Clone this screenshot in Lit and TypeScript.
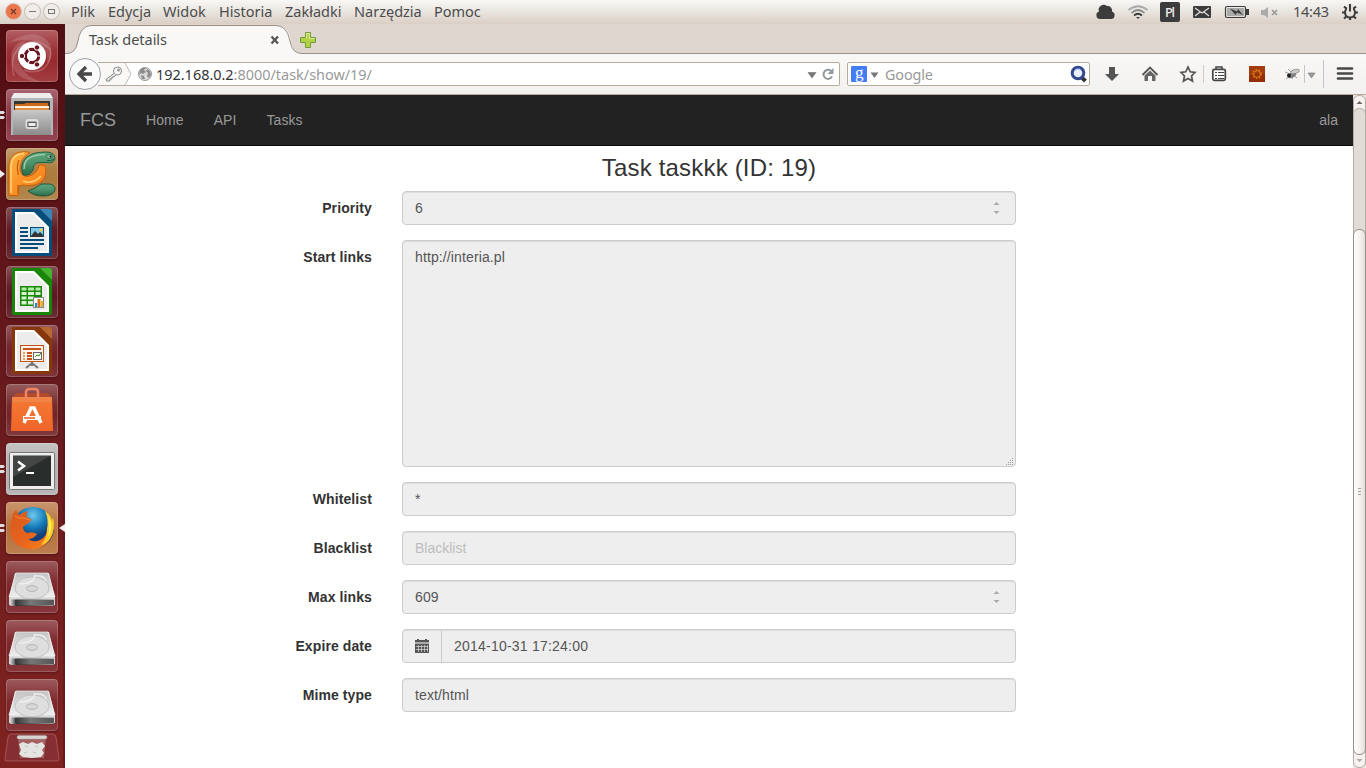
import { LitElement, html, css, svg, nothing } from "lit";
import { customElement, property } from "lit/decorators.js";

const page = (edge: string, body: string, inner: unknown) => svg`
  <path d="M6 2H34L46 14V47q0 2-2 2H8q-2 0-2-2z" fill="${edge}"/>
  <path d="M34 2H43q3 0 3 3V14z" fill="${body}"/>
  <path d="M9 5H28L43 20V46H9z" fill="#fff"/>
  <path d="M11 7H27L41 21V44H11z" fill="#ececec"/>
  ${inner}`;

const disk = svg`
  <path d="M9 12H43L49 37V44H3V37z" fill="#d5d5d5"/>
  <path d="M10 12H42L49 36H3z" fill="url(#metal)" stroke="#f2f2f2" stroke-width=".7"/>
  <ellipse cx="26" cy="27" rx="17" ry="11" fill="#dedede" stroke="#c2c2c2"/>
  <path d="M13 23q15 0 16-9M40 20q-1-6-12-5" fill="none" stroke="#f3f3f3" stroke-width="1.2"/>
  <ellipse cx="26" cy="27.500" rx="5.500" ry="2.800" fill="#d8d8d8" stroke="#b2b2b2"/>
  <path d="M4 38.500H48V44q0 1-1 1H5q-1 0-1-1z" fill="url(#dark)"/>
  <path d="M9 39H48V44H9z" fill="url(#slot)"/>`;

const icons: Record<string, unknown> = {
  ubuntu: svg`
    <path d="M8 46Q2 24 18 14Q31 7 44 19Q47 31 37 39Q28 44 18 40" fill="none" stroke="#fff" stroke-width="1.500" opacity=".2"/>
    <path d="M2 13Q30-5 44 14Q48 27 41 34Q43 17 28 11Q17 8 2 13M5 27Q5 51 36 52Q18 47 13 32Q10 18 21 10Q6 13 5 27" fill="#fff" opacity=".15"/>
    <circle cx="26" cy="26" r="14" fill="#fff"/>
    <circle cx="26" cy="26" r="6.700" fill="none" stroke="#68151d" stroke-width="3.200"/>
    <path d="M26 26H36M26 26L21 17M26 26L21 35" stroke="#fff" stroke-width="1.200"/>
    <circle cx="26" cy="26" r="5" fill="#fff"/>
    <g fill="#68151d" stroke="#fff" stroke-width="1"><circle cx="16" cy="26" r="2.700"/><circle cx="31" cy="17.500" r="2.700"/><circle cx="31" cy="34.500" r="2.700"/></g>`,
  files: svg`
    <path d="M8 4H44L47 10V46H5V10z" fill="#b5b5b5"/><path d="M8 4H44L47 9H5z" fill="#ededed"/>
    <path d="M8 12H44V22H8z" fill="#383632"/><path d="M9 15H18L20 14H42V20H9z" fill="#cc691d"/>
    <path d="M9 17H43V22H9z" fill="#fff2dc"/><path d="M9 19H43V23H9z" fill="#df9244"/>
    <path d="M7 21H45V46H7z" fill="url(#metal2)"/><rect x="20.500" y="31" width="11" height="8" rx="2" fill="#aaa" stroke="#ddd" stroke-width="2"/>
    <rect x="22" y="33.500" width="8" height="4" fill="#eee" stroke="#555"/>`,
  charm: svg`
    <path d="M3 47.500V17Q4 4 18 3.500L24 4.500Q13 11 14 22Q16 30 23 28Q31 26 33 17H39Q42 28 35 34Q28 39 17 37L12.500 38V47.500z" fill="url(#orange)" stroke="#c65a0c" stroke-width=".9"/>
    <path d="M5 45V18Q6 6 18 5.500M17 33Q27 37 35 28" fill="none" stroke="#ffd27a" stroke-width="1.500"/>
    <path d="M12 37V46M13 12Q10 18 12.500 27" fill="none" stroke="#c65a0c" stroke-width="1.200"/>
    <path d="M17 27Q12 12 26 6Q30 4 40 4Q49 4 49 11Q47 16 41 14.500H33Q27 15 27 22Q24 28 17 27z" fill="url(#green)" stroke="#1b5a40" stroke-width=".9"/>
    <path d="M18 21Q18 10 28 8Q33 6 39 6.500" fill="none" stroke="#9bcaa5" stroke-width="1.500"/>
    <path d="M22 43Q29 41 35 36H43Q49 36 49 42Q47 48 37 48Q28 48 22 43z" fill="url(#green)" stroke="#174e38" stroke-width=".9"/>
    <ellipse cx="43.500" cy="8.500" rx="3" ry="1.800" fill="#9dc4a4" stroke="#1b5a40" stroke-width=".7"/><circle cx="44.500" cy="8.500" r="1.100" fill="#142f25"/><path d="M41 12.500Q45 13.500 48 11" fill="none" stroke="#1b5a40"/>`,
  writer: page("#064d7c", "#3887b7", svg`<path d="M14 21H22M14 25H22M14 29H22M14 33H38M14 37H38M14 41H32" stroke="#064d7c" stroke-width="2"/><rect x="24.500" y="20.500" width="13" height="9" fill="#83c7e9" stroke="#064d7c"/><path d="M25 29L29 24L32 27L34 25L37 28V30H25z" fill="#343434"/><circle cx="35" cy="23" r="1.500" fill="#fbce2a"/>`),
  calc: page("#188707", "#43b52e", svg`<rect x="14" y="20" width="22" height="20" fill="#188707"/><g fill="#b3edaa"><path d="M15.500 21.500h5v3h-5zM22 21.500h6v3h-6zM29.500 21.500h5v3h-5z"/></g><g fill="#d7f3d2"><path d="M15.500 26h5v3h-5zM22 26h6v3h-6zM29.500 26h5v3h-5zM15.500 30.500h5v3h-5zM22 30.500h6v3h-6zM15.500 35h5v3.500h-5zM22 35h6v3.500h-6z"/></g><rect x="27.500" y="31.500" width="10" height="10" fill="#fff" stroke="#888"/><path d="M29 37h2v4h-2z" fill="#118be0"/><path d="M31.500 33h3v8h-3z" fill="#dc6c12"/><path d="M35 35h2v6h-2z" fill="#e6b619"/>`),
  impress: page("#86370b", "#b7682f", svg`<path d="M26 38L20 43M26 38L32 43M26 36V41" stroke="#777" stroke-width="2"/><rect x="14.500" y="20.500" width="23" height="16" fill="#fff6ee" stroke="#c75417"/><path d="M17 24H35M21 28H26M21 31H26M21 34H26" stroke="#cb5216" stroke-width="2"/><path d="M17 28h2m-2 3h2m-2 3h2" stroke="#e99a65" stroke-width="2"/><rect x="27.500" y="27.500" width="8" height="7" fill="#fff" stroke="#666"/><path d="M29 32L31 30L33 31L35 28" stroke="#2a9519" fill="none"/>`),
  software: svg`
    <path d="M6 14L10 9H42L46 14z" fill="#b34a2b"/>
    <path d="M6 13H46L47 47H5z" fill="url(#bag)"/><path d="M6 13H46L45 18H7z" fill="#ef8d55" opacity=".6"/>
    <path d="M20 15V8Q20 5 24 5H29Q32 5 32 8V15" fill="none" stroke="#ed8362" stroke-width="2.500"/>
    <path d="M18 39L25 24H28L35 39" fill="none" stroke="#fff" stroke-width="3.500"/>
    <path d="M17 34H35" stroke="#fff" stroke-width="4"/><path d="M18 34H29" stroke="#eb5b20" stroke-width="1.500"/>`,
  terminal: svg`
    <rect x="3.500" y="9.500" width="45" height="37" rx="1" fill="#eee" stroke="#777"/>
    <rect x="7" y="12.500" width="38" height="30.500" fill="#292d2c"/><path d="M7 12.500H45L7 34z" fill="#fff" opacity=".12"/>
    <path d="M12 18.500L18 23L12 27.500" fill="none" stroke="#fff" stroke-width="2.500"/><path d="M20 30H28" stroke="#fff" stroke-width="2"/>`,
  firefox: svg`
    <circle cx="27" cy="26" r="21" fill="url(#globe)"/>
    <path d="M7 12L10 8L13 13Q17 10 22 9Q20 13 21 15L25 17Q25 20 21 22L17 25Q17 30 22 31Q26 29 31 32Q28 37 22 37Q28 41 34 38Q42 34 42 24L47 20Q49 31 42 40Q34 49 22 47Q9 45 5 34Q3 22 7 12z" fill="url(#fox)"/>
    <path d="M39 9Q46 14 46 19L47 15Q50 27 44 37Q40 42 35 43Q41 36 41 27Q43 18 39 9" fill="#ffc928"/>
    <path d="M42 14Q46 20 45 28Q44 33 42 35Q44 27 42 14" fill="#fff061"/>
    <path d="M9 14Q13 17 18 16L24 18" fill="none" stroke="#fb9837" stroke-width=".8"/>`,
  disk,
};

const launcher = [
  ["ubuntu", "#982a2f", ""], ["files", "#893443", "two"], ["charm", "#ac7b3c", "one"],
  ["writer", "#5b1921", ""], ["calc", "#5b1921", ""], ["impress", "#702127", ""],
  ["software", "#722528", ""], ["terminal", "#b3afb0", "two"], ["firefox", "#b7723e", "two active"],
  ["disk", "#7b2428", ""], ["disk", "#7b2428", ""], ["disk", "#7b2428", ""],
];

const tileIcon = (name: string) => html`<svg width="52" height="52" viewBox="0 0 52 52"><defs>
  <linearGradient id="metal" x2="0" y2="1"><stop stop-color="#c4c4c4"/><stop offset="1" stop-color="#eee"/></linearGradient>
  <linearGradient id="metal2" x2="0" y2="1"><stop stop-color="#c8c8c8"/><stop offset="1" stop-color="#8c8c8c"/></linearGradient>
  <linearGradient id="dark"><stop stop-color="#ddd"/><stop offset=".15" stop-color="#333"/><stop offset="1" stop-color="#999"/></linearGradient>
  <linearGradient id="slot"><stop stop-color="#333"/><stop offset=".4" stop-color="#777"/><stop offset="1" stop-color="#555"/></linearGradient>
  <linearGradient id="orange" x2="1" y2="1"><stop stop-color="#ffb545"/><stop offset=".5" stop-color="#fb9226"/><stop offset="1" stop-color="#f07c16"/></linearGradient>
  <linearGradient id="green" x2="0" y2="1"><stop stop-color="#5fa67c"/><stop offset=".5" stop-color="#4c926b"/><stop offset="1" stop-color="#2b6b49"/></linearGradient>
  <linearGradient id="bag" x2="0" y2="1"><stop stop-color="#f47934"/><stop offset="1" stop-color="#ef6529"/></linearGradient>
  <radialGradient id="globe" cy=".2"><stop stop-color="#6cc9ef"/><stop offset=".6" stop-color="#1479b7"/><stop offset="1" stop-color="#133e79"/></radialGradient>
  <linearGradient id="fox" y2="1"><stop stop-color="#d9591d"/><stop offset=".55" stop-color="#e8641d"/><stop offset="1" stop-color="#f98b1c"/></linearGradient>
</defs>${icons[name]}</svg>`;

@customElement("app-launcher")
class AppLauncher extends LitElement {
  static styles = css`
    :host { display: block; width: 65px; height: 744px; overflow: hidden; background: linear-gradient(#520e13, #681a1d 50%, #802320); box-shadow: inset -2px 0 1px #49151980; box-sizing: border-box; padding-top: 6px; }
    .items { display: flex; flex-direction: column; gap: 7px; }
    .row { height: 52px; display: grid; grid-template-columns: 6px 52px 7px; align-items: center; }
    .tile { width: 52px; height: 52px; border-radius: 4px; box-shadow: inset 0 0 0 1px #ffffff30, 0 1px 2px #24050766; background-image: linear-gradient(#ffffff40, #ffffff08 40%, #fff0 60%, #ffffff18); }
    svg { display: block; }
    .trash { margin: 2px 0 0 3px; }
  `;
  render() {
    return html`
      <div class="items">${launcher.map(([name, color, state]) => html`<div class="row">
        <svg width="6" height="16" viewBox="0 0 6 16">${state.includes("two") ? svg`<path d="M0 4H3.500L5 5.500L3.500 7H0zM0 9H3.500L5 10.500L3.500 12H0z" fill="#ddd"/>` : state === "one" ? svg`<path d="M0 4L5 8L0 12z" fill="#eee"/>` : nothing}</svg>
        <div class="tile" style="background-color:${color}">${tileIcon(name)}</div>
        <svg width="7" height="14" viewBox="0 0 7 14">${state.includes("active") ? svg`<path d="M7 3L1 7L7 11z" fill="#eee"/>` : nothing}</svg>
      </div>`)}</div>
      <svg class="trash" width="58" height="31" viewBox="0 0 58 31">
        <path d="M8 1H50Q52 1 53 4L56 26Q56 28 54 28H4Q1 28 2 26L5 4Q6 1 8 1z" fill="#842f31" stroke="#b26566" stroke-width=".7"/>
        <path d="M15 4H43L41 25H17z" fill="#b98384" opacity=".6"/>
        <path d="M16 11L20 9L25 11L29 9L34 11L39 9L42 13L39 17L41 20L38 24L29 25L20 24L16 21L18 17z" fill="#e4e4e1"/>
        <path d="M22 13L25 14M32 13L35 14M30 19L33 20M21 20L24 19" fill="none" stroke="#c3c3c0"/>
        <rect x="14" y="2.500" width="30" height="3.500" rx="1.700" fill="#d8d4d3" stroke="#a8a1a0" stroke-width=".5"/>
      </svg>`;
  }
}

@customElement("system-bar")
class SystemBar extends LitElement {
  static styles = css`
    :host { display: flex; height: 24px; box-sizing: border-box; background: linear-gradient(#f9f7f5, #eae6e1 45%, #dacfc5); font: 14.500px/23px "Noto Sans", "Open Sans", sans-serif; color: #4c4c4c; }
    .controls { width: 71px; height: 24px; flex: none; }
    .menu { display: flex; flex: 1; }
    .menu span { white-space: nowrap; flex: none; }
    .tray { width: 274px; height: 24px; flex: none; }
  `;
  render() {
    const menus: [string, number][] = [["Plik", 37], ["Edycja", 55], ["Widok", 56], ["Historia", 66], ["Zakładki", 69], ["Narzędzia", 80], ["Pomoc", 60]];
    return html`<svg class="controls" viewBox="0 0 71 24">
      <circle cx="13.500" cy="11.500" r="8" fill="#ed764d" stroke="#d3cac2"/><path d="M11 9L16 14M16 9L11 14" stroke="#713d2e" stroke-width="1.300"/>
      <circle cx="32.500" cy="11.500" r="8" fill="#f0ece7" stroke="#c4bcb3"/><path d="M29 11.500H36" stroke="#777"/>
      <circle cx="51.500" cy="11.500" r="8" fill="#f0ece7" stroke="#c4bcb3"/><rect x="48.500" y="9.500" width="6" height="4" fill="none" stroke="#777"/></svg>
      <div class="menu">${menus.map(([m, w]) => html`<span style="width:${w}px">${m}</span>`)}</div>
      <svg class="tray" viewBox="1092 0 274 24" fill="#3c3c3c">
        <path d="M1100 19a3.800 3.800 0 0 1-1-7.400a5 5 0 0 1 8-5.500a4.500 4.500 0 0 1 5 5.500a3.800 3.800 0 0 1-1 7.400z"/>
        <g fill="none" stroke-width="1.700"><path d="M1128.500 10Q1138 2.500 1147.500 10" stroke="#aaa"/><path d="M1131.500 13Q1138 7 1144.500 13" stroke="#888"/><path d="M1134 15.500Q1138 12 1142 15.500" stroke="#3c3c3c"/></g><path d="M1136 17H1140L1138 19z"/>
        <rect x="1160" y="2" width="20" height="20" rx="2"/><text x="1165" y="17" font-size="13" font-weight="500" fill="#eee" textLength="10">Pl</text>
        <rect x="1193" y="6" width="18" height="12" rx="1"/><path d="M1195 8L1202 13L1209 8M1195 16L1200 12M1209 16L1204 12" fill="none" stroke="#e5dfd9" stroke-width="1.200"/>
        <rect x="1225.500" y="6.500" width="20" height="11" rx="1.500" fill="none" stroke="#3c3c3c" stroke-width="1.200"/><rect x="1227" y="8" width="17" height="8" fill="#aaa"/><path d="M1246 9h3v6h-3"/><path d="M1230 8.500L1237 11.500L1238 9L1243 15L1237 12.500L1235.500 15z"/>
        <path d="M1261 10H1264L1268 7V18L1264 15H1261z" fill="#aaa"/><path d="M1272 10L1277 15M1277 10L1272 15" stroke="#999" stroke-width="1.700"/>
        <text x="1293" y="17" font-size="14.500" fill="#4c4c4c" textLength="36">14:43</text>
        <circle cx="1350" cy="12.500" r="5" fill="none" stroke="#3c3c3c" stroke-width="2"/><g stroke="#3c3c3c" stroke-width="2.200"><path d="M1350 17V20M1342 12.500H1345M1355 12.500H1358M1344 6.500L1347 9M1356 6.500L1353 9M1344 18.500L1347 16M1356 18.500L1353 16"/></g><path d="M1347 4H1353V11H1347z" fill="#e7e1dc"/><path d="M1349 4H1351V11.500H1349z"/>
      </svg>`;
  }
}

@customElement("browser-chrome")
class BrowserChrome extends LitElement {
  static styles = css`
    :host { display: block; height: 71px; font-family: "Noto Sans", "Open Sans", sans-serif; font-size: 14.400px; color: #3c3c3c; }
    .tabs { display: block; height: 30px; width: 1301px; background: #dfd6d0; }
    .bar { height: 41px; box-sizing: border-box; border-bottom: 1px solid #b6aa99; background: linear-gradient(#f9f8f6, #f3f1ef); display: flex; align-items: center; }
    .bar svg { display: block; flex: none; }
    .nav { width: 72px; height: 40px; }
    .address { flex: none; width: 703px; height: 24px; box-sizing: border-box; border: 1px solid #b7ab9c; border-left: 0; border-radius: 0 2px 2px 0; background: #fff; display: flex; align-items: center; justify-content: space-between; }
    .search { flex: none; width: 243px; height: 24px; margin-left: 7px; box-sizing: border-box; border: 1px solid #b7ab9c; border-radius: 2px; background: #fff; display: flex; align-items: center; color: #999; justify-content: space-between; }
    .search span { flex: 1; letter-spacing: -.15px; }
    .tools { width: 276px; height: 40px; }
  `;
  render() {
    return html`<svg class="tabs" viewBox="65 24 1301 30">
      <path d="M65 53.500Q75 54 77.500 45Q80 25.500 90 25.500H276Q289 25.500 291 42Q293 53.500 302 53.500V54H65z" fill="#f9f8f6"/>
      <path d="M65 53.500H67Q75 53.500 77.500 43Q80 25.500 91 25.500H276Q287 25.500 290 41Q292 53.500 302 53.500H1366" fill="none" stroke="#978f88"/>
      <text x="89" y="45" font-size="14.500" fill="#4b4b4b" textLength="78">Task details</text>
      <path d="M271.500 36.500L278 43.500M278 36.500L271.500 43.500" stroke="#555" stroke-width="2.300"/>
      <path d="M305.500 32.500H310.500V37.500H315.500V42.500H310.500V47.500H305.500V42.500H300.500V37.500H305.500z" fill="#b1d241" stroke="#78993b"/>
      <path d="M306.500 38.500V33.500H309.500V38.500H314.500" fill="none" stroke="#dbed9b"/>
    </svg>
    <div class="bar">
      <svg class="nav" viewBox="65 54 72 40"><path d="M98 62H137V86H98z" fill="#fff"/><path d="M98 63H125L131 74L125 85H98z" fill="#f9f8f6"/><path d="M98 62.500H137M98 85.500H137" stroke="#b7ab9c"/><path d="M125 63L131 74L125 85" fill="none" stroke="#bbb"/>
        <circle cx="85" cy="74" r="15.500" fill="#fafafa" stroke="#9ba0aa"/><path d="M92 74H81M86 67L79 74L86 81" fill="none" stroke="#484848" stroke-width="3.300"/>
        <circle cx="117.500" cy="71" r="4" fill="#f7f7f7" stroke="#888"/><circle cx="118.500" cy="70" r="1.500" fill="#999"/><path d="M114 73.500L106.500 79V81H110V79H112V77H114L116 75" fill="#e8e8e8" stroke="#888"/>
      </svg>
      <div class="address"><svg width="629" height="22" viewBox="137 63 629 22">
        <circle cx="145" cy="74" r="6.500" fill="#d9d9d9" stroke="#999"/><path d="M140 70Q142 67 146 68L144 70L146 72L143 74L141 73L139 75zM147 69L150 71L151 75L149 78L147 76L148 73L146 71zM141 75L144 76L145 79L142 79z" fill="#8c8c8c"/>
        <text x="156" y="80" fill="#999" font-size="14.500" textLength="216" lengthAdjust="spacingAndGlyphs"><tspan fill="#333">192.168.0.2</tspan>:8000/task/show/19/</text></svg><svg width="34" height="22" viewBox="806 63 34 22"><path d="M809 72.500H817L813 78z" fill="#777" stroke="#666" stroke-width=".5"/><path d="M832.500 71.500A4.500 4.500 0 1 0 833 76.500" fill="none" stroke="#91999e" stroke-width="2"/><path d="M834.500 68V74H828.500z" fill="#91999e"/></svg></div>
      <div class="search"><svg width="37" height="22" viewBox="848 63 37 22"><rect x="851" y="66" width="16" height="16" rx="1" fill="#437cf4"/><text x="855" y="77.500" font-family="Liberation Serif" font-size="17" fill="#fff">g</text><path d="M870.500 72.500H878.500L874.500 78z" fill="#777"/></svg><span>Google</span><svg width="22" height="22" viewBox="1067 63 22 22"><path d="M1081 77L1085.500 81" stroke="#333" stroke-width="4"/><circle cx="1078" cy="73" r="5.800" fill="#e8efff" stroke="#34478f" stroke-width="3"/><path d="M1074 71Q1076 68 1080 69" fill="none" stroke="#85a4e2"/></svg></div>
      <svg class="tools" viewBox="1090 54 276 40" fill="#555">
        <path d="M1109 67H1115V74H1119L1112 81L1105 74H1109z"/>
        <path d="M1142.500 75L1150 67.500L1157.500 75" fill="none" stroke="#555" stroke-width="1.800"/><path d="M1144.500 75.500L1150 70.500L1155.500 75.500V81H1152V76H1148V81H1144.500z" fill="#666"/>
        <path d="M1188 67L1190.200 71.800L1195 72.300L1191.500 76L1192.500 81L1188 78.500L1183.500 81L1184.500 76L1181 72.300L1185.800 71.800z" fill="none" stroke="#555" stroke-width="1.700"/>
        <path d="M1203.500 65V83" stroke="#ccc"/><rect x="1212.800" y="69.300" width="12.500" height="11" rx="1.500" fill="#fff" stroke="#444" stroke-width="1.700"/><path d="M1216 69V67H1222V69" fill="none" stroke="#444" stroke-width="1.500"/><path d="M1215 72.500H1217M1215 75.500H1217M1215 78.500H1217M1218 72.500H1224M1218 75.500H1224M1218 78.500H1224" fill="none" stroke="#444"/>
        <rect x="1249" y="66" width="16" height="16" fill="#942e06"/><path d="M1249 66H1265V74Q1255 72 1249 76z" fill="#a33c0b"/><circle cx="1257" cy="74" r="4.200" fill="none" stroke="#d87c18" stroke-width="1.500" stroke-dasharray="1.500 1.500"/><circle cx="1257" cy="74" r="3.300" fill="none" stroke="#d87c18"/>
        <g stroke="#777" fill="#ccc"><ellipse cx="1292" cy="75" rx="4" ry="2" transform="rotate(-25 1292 75)" fill="#888"/><ellipse cx="1295" cy="71.500" rx="4.500" ry="2" transform="rotate(-15 1295 71)" stroke-width=".6"/><path d="M1285 72L1290 74M1286 79L1290 76M1292 79L1293 76M1297 78L1293 75M1288 69L1291 72" stroke-width=".7"/></g><circle cx="1289" cy="75.500" r="2" fill="#222"/>
        <path d="M1304.500 65V83M1323.500 60V88" stroke="#c3c5ca"/><path d="M1308 73H1315L1311.500 78z" fill="#999" stroke="#777" stroke-width=".6"/>
        <path d="M1338 68.500H1352M1338 73.500H1352M1338 78.500H1352" stroke-linecap="round" stroke="#484848" stroke-width="2.700"/>
      </svg>
    </div>`;
  }
}

@customElement("field-row")
class FieldRow extends LitElement {
  @property() label = "";
  @property() value = "";
  @property() kind = "";
  static styles = css`
    :host { display: grid; grid-template-columns: 307px 614px; column-gap: 30px; font: 14px/20px "Liberation Sans", Arial, sans-serif; color: #333; }
    .label { font-weight: 700; text-align: right; padding-top: 7px; letter-spacing: .1px; }
    .control { display: flex; justify-content: space-between; height: 34px; box-sizing: border-box; border: 1px solid #ccc; border-radius: 4px; background: #eee; color: #555; padding: 6px 12px; box-shadow: inset 0 1px 1px #00000013; letter-spacing: .12px; }
    .area { height: 227px; padding-right: 0; padding-bottom: 0; }
    .area svg { align-self: flex-end; }
    .placeholder { color: #bdbdbd; letter-spacing: 0; }
    .date { padding-left: 0; letter-spacing: .22px; }
    .value { flex: 1; }
    .addon { width: 38px; height: 32px; margin: -6px 12px -6px 0; border-right: 1px solid #ccc; display: grid; place-items: center; }
    .spin { margin: 3px 2px 0 0; }
  `;
  render() {
    return html`<div class="label">${this.label}</div><div class="control ${this.kind}">
      ${this.kind === "date" ? html`<div class="addon"><svg width="14" height="14" fill="#555"><path d="M0 1H2V0H4V1H10V0H12V1H14V3H0z"/><path d="M0 3H14V5H0z" fill="#aaa"/><path d="M0 5H14V14H0z"/><path d="M1 7.500H13M1 10.500H13M3.500 6V13M6.500 6V13M9.500 6V13M12.500 6V13" stroke="#eee" stroke-width=".6"/></svg></div>` : nothing}
      <span class="value">${this.value}</span>
      ${this.kind === "number" ? html`<svg class="spin" width="10" height="14"><path d="M2.500 4L5.500 1L8.500 4zM2.500 10L5.500 13L8.500 10z" fill="#aaa"/></svg>` : nothing}
      ${this.kind === "area" ? html`<svg width="11" height="11"><path d="M2 9.500H10M4 7.500H10M6 5.500H10M8 3.500H10" stroke="#999" stroke-dasharray="1 1"/></svg>` : nothing}
    </div>`;
  }
}

@customElement("app-root")
class AppRoot extends LitElement {
  static styles = css`
    :host { display: block; width: 1366px; height: 768px; overflow: hidden; background: #fff; font-family: "Liberation Sans", Arial, sans-serif; }
    .desktop { display: grid; grid-template-columns: 65px 1301px; }
    .view { display: grid; grid-template-columns: 1288px 13px; height: 673px; }
    .navbar { display: flex; align-items: center; height: 51px; box-sizing: border-box; border-bottom: 1px solid #080808; background: #222; color: #999; font-size: 14px; padding: 0 15px; gap: 30px; letter-spacing: .08px; }
    .brand { font-size: 18px; letter-spacing: 0; }
    .user { margin-left: auto; letter-spacing: 0; }
    h1 { margin: 9px 0 10px; text-align: center; font-size: 24px; line-height: 26px; font-weight: 400; color: #333; letter-spacing: .18px; }
    .form { display: flex; flex-direction: column; gap: 15px; }
    .scroll { display: block; }
  `;
  render() {
    return html`<system-bar></system-bar><div class="desktop"><app-launcher></app-launcher><main>
      <browser-chrome></browser-chrome>
      <div class="view"><section>
        <nav class="navbar"><span class="brand">FCS</span><span>Home</span><span>API</span><span>Tasks</span><span class="user">ala</span></nav>
        <h1>Task taskkk (ID: 19)</h1>
        <div class="form">
          <field-row label="Priority" value="6" kind="number"></field-row>
          <field-row label="Start links" value="http://interia.pl" kind="area"></field-row>
          <field-row label="Whitelist" value="*"></field-row>
          <field-row label="Blacklist" value="Blacklist" kind="placeholder"></field-row>
          <field-row label="Max links" value="609" kind="number"></field-row>
          <field-row label="Expire date" value="2014-10-31 17:24:00" kind="date"></field-row>
          <field-row label="Mime type" value="text/html"></field-row>
        </div>
      </section>
      <svg class="scroll" width="13" height="673" viewBox="0 0 13 673">
        <defs><linearGradient id="thumb"><stop stop-color="#fff"/><stop offset=".5" stop-color="#f5f3f0"/><stop offset="1" stop-color="#e3dcd5"/></linearGradient></defs>
        <path d="M0 0H13V673H0z" fill="#e9e4df"/><rect x=".5" y=".5" width="12" height="672" rx="5.500" fill="#f5f2f0" stroke="#b6aca3"/>
        <path d="M.5 19Q1 13.500 6.500 13.500Q12 13.500 12.500 19V150H.5z" fill="#e2dcd6" stroke="#b6aca3"/>
        <rect x=".5" y="134.500" width="12" height="525" rx="5.500" fill="url(#thumb)" stroke="#978f87"/>
        <path d="M3.500 9H9.500L6.500 6z" fill="#666"/><path d="M3.500 664H9.500L6.500 667z" fill="#aaa"/><path d="M5 393.500H8M5 396.500H8M5 399.500H8" stroke="#aaa29a"/>
      </svg></div></main></div>`;
  }
}
